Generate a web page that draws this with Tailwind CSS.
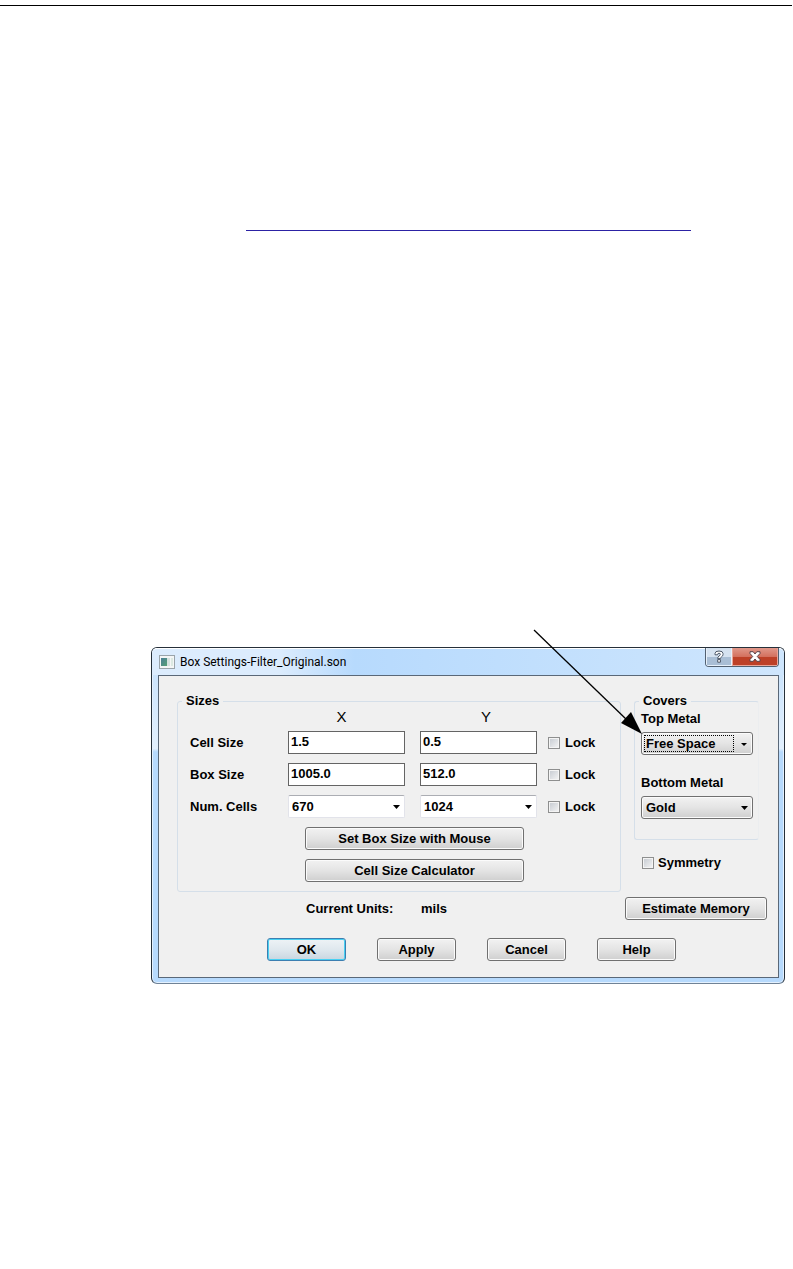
<!DOCTYPE html>
<html lang="en">
<head>
<meta charset="utf-8">
<meta name="viewport" content="width=device-width, initial-scale=1">
<title>Box Settings</title>
<script src="https://cdn.jsdelivr.net/npm/@tailwindcss/browser@4"></script>
</head>
<body class="bg-white pt-[5px] text-black">
<hr class="mr-px border-t border-black">
<div class="ml-[246px] mr-[102px] mt-56 border-t border-[#2c22a4]"></div>

<main class="relative ml-[151px] mr-2 mt-[416px] rounded-md border border-[#26303a] border-b-[#6f8296] bg-linear-to-b from-[#c4e0fc] from-0% via-[#e2f0fe] via-30% to-[#b7dafd] to-31% px-px pb-px font-['Liberation_Sans',Arial,sans-serif] text-[13px] leading-4 font-bold shadow-[inset_0_0_0_1px_#e4f1fe]">
  <header class="-mx-px flex h-[27px] items-start rounded-t-[5px] border-t border-white bg-linear-to-r from-[#dcecfd] from-20% via-[#b7dafd] via-32% to-[#cfe6fd] pl-[7px] pr-[5px]">
    <svg class="mt-[6px] h-[14px] w-4" viewBox="0 0 16 14" aria-hidden="true">
      <defs><linearGradient id="ic" x2="1" y2="1"><stop stop-color="#4b7f96"/><stop offset="1" stop-color="#55a076"/></linearGradient></defs>
      <rect x=".5" y=".5" width="15" height="13" fill="#f4f6f6" stroke="#9aa4aa"/>
      <rect x="2" y="3" width="6" height="8" fill="url(#ic)"/><rect x="8" y="3" width="3" height="8" fill="#d5e2df"/><rect x="12" y="3" width="2" height="8" fill="#dce9e2"/>
    </svg>
    <h1 class="ml-[5px] mt-[5px] font-['Roboto',sans-serif] text-[12px] font-normal leading-4">Box Settings-Filter_Original.son</h1>
    <div class="-mt-px ml-auto flex h-[19px] overflow-hidden rounded-b border border-t-0 border-[#526070]">
      <button type="button" aria-label="Help" class="flex w-[26px] items-center justify-center border border-t-0 border-[#e6f0fa] bg-linear-to-b from-[#d5e2f0] from-50% to-[#a9bed5] to-50%">
        <svg class="h-[13px] w-[10px]" viewBox="0 0 10 13"><path d="M1 4.800V3.500Q1 1 5 1t4 2.500v1Q9 6 7.500 6.900 6.400 7.500 6.400 8.600H3.700Q3.600 6.800 5 6q1.300-.7 1.300-1.500v-.6Q6.300 3.300 5 3.300t-1.300.7v.8zM3.700 9.600h2.700v2.600H3.700z" fill="#fff" stroke="#4d5868"/></svg>
      </button>
      <button type="button" aria-label="Close" class="flex w-[46px] items-center justify-center border border-t-0 border-[#e9a598] bg-linear-to-b from-[#e0988a] via-[#d4715f] via-50% to-[#bd4027] to-52%">
        <svg class="h-[11px] w-3" viewBox="0 0 12 11"><path d="M1 .7h3.200L6 3 7.800.7H11v1.800L8.300 5.500 11 8.500v1.800H7.800L6 8l-1.800 2.300H1V8.500l2.700-3L1 2.500z" fill="#fff" stroke="#59434a"/></svg>
      </button>
    </div>
  </header>

  <form class="mb-1 ml-[5px] mr-1 border border-[#5a6878] bg-[#f0f0f0] pb-4 pl-[18px] pr-[11px] pt-[17px]">
    <div class="flex items-start gap-[13px]">
      <fieldset class="min-w-0 flex-1 rounded-[3px] border border-[#d5dfe9] pb-[9px] pl-3 pt-0">
        <legend class="-ml-2 px-1">Sizes</legend>
        <div class="flex flex-col gap-[9px]">
          <div class="grid h-[13px] grid-cols-[98px_132px_128px_1fr] items-center text-[15px]">
            <span class="col-start-2 w-[107px] text-center font-normal">X</span><span class="w-[132px] text-center font-normal">Y</span>
          </div>
          <div class="grid h-[23px] grid-cols-[98px_132px_128px_1fr] items-center">
            <label for="cx">Cell Size</label>
            <input id="cx" value="1.5" class="h-[23px] w-[117px] border border-[#646464] bg-white px-0.5 pb-[3px]">
            <input aria-label="Cell Size Y" value="0.5" class="h-[23px] w-[117px] border border-[#646464] bg-white px-0.5 pb-[3px]">
            <label class="flex items-center gap-[5px]"><input type="checkbox" class="h-3 w-3 appearance-none border border-[#8e8f8f] bg-linear-to-br from-[#c4c9d0] to-[#f6f6f6] shadow-[inset_0_0_0_1px_#f4f4f4]">Lock</label>
          </div>
          <div class="grid h-[23px] grid-cols-[98px_132px_128px_1fr] items-center">
            <label for="bx">Box Size</label>
            <input id="bx" value="1005.0" class="h-[23px] w-[117px] border border-[#646464] bg-white px-0.5 pb-[3px]">
            <input aria-label="Box Size Y" value="512.0" class="h-[23px] w-[117px] border border-[#646464] bg-white px-0.5 pb-[3px]">
            <label class="flex items-center gap-[5px]"><input type="checkbox" class="h-3 w-3 appearance-none border border-[#8e8f8f] bg-linear-to-br from-[#c4c9d0] to-[#f6f6f6] shadow-[inset_0_0_0_1px_#f4f4f4]">Lock</label>
          </div>
          <div class="grid h-[23px] grid-cols-[98px_132px_128px_1fr] items-center">
            <label for="nx">Num. Cells</label>
            <div class="relative h-[23px] w-[117px]">
              <select id="nx" class="h-full w-full appearance-none rounded-[2px] border border-[#e2e3ea] border-t-[#abadb3] bg-white pl-[3px]"><option>670</option></select>
              <svg class="pointer-events-none absolute right-[5px] top-[10px] h-1 w-[7px]" viewBox="0 0 7 4"><path d="M0 0h7L3.500 4z"/></svg>
            </div>
            <div class="relative h-[23px] w-[117px]">
              <select aria-label="Num. Cells Y" class="h-full w-full appearance-none rounded-[2px] border border-[#e2e3ea] border-t-[#abadb3] bg-white pl-[3px]"><option>1024</option></select>
              <svg class="pointer-events-none absolute right-[5px] top-[10px] h-1 w-[7px]" viewBox="0 0 7 4"><path d="M0 0h7L3.500 4z"/></svg>
            </div>
            <label class="flex items-center gap-[5px]"><input type="checkbox" class="h-3 w-3 appearance-none border border-[#8e8f8f] bg-linear-to-br from-[#c4c9d0] to-[#f6f6f6] shadow-[inset_0_0_0_1px_#f4f4f4]">Lock</label>
          </div>
          <button type="button" class="ml-[115px] h-[23px] w-[219px] rounded-[3px] border border-[#707070] bg-linear-to-b from-[#f2f2f2] via-[#e4e4e4] via-50% to-[#cfcfcf] shadow-[inset_0_0_0_1px_#fbfbfb]">Set Box Size with Mouse</button>
          <button type="button" class="ml-[115px] h-[23px] w-[219px] rounded-[3px] border border-[#707070] bg-linear-to-b from-[#f2f2f2] via-[#e4e4e4] via-50% to-[#cfcfcf] shadow-[inset_0_0_0_1px_#fbfbfb]">Cell Size Calculator</button>
        </div>
      </fieldset>

      <div class="mr-2 w-[125px]">
        <fieldset class="rounded-[3px] border border-[#d5dfe9] border-r-[#ebedef] pb-5 pl-1.5 pr-[5px]">
          <legend class="-ml-0.5 px-1">Covers</legend>
          <label for="top" class="block pt-0.5">Top Metal</label>
          <div class="relative mt-[5px] h-[23px]">
            <select id="top" class="h-full w-full appearance-none rounded-[3px] border border-[#707070] bg-linear-to-b from-[#f2f2f2] via-[#e4e4e4] via-50% to-[#cfcfcf] pl-1 shadow-[inset_0_0_0_1px_#fbfbfb]"><option>Free Space</option></select>
            <span class="pointer-events-none absolute bottom-[3px] left-[3px] right-[19px] top-[3px] border border-dotted border-black"></span>
            <svg class="pointer-events-none absolute right-[6px] top-[11px] h-[3px] w-1.5" viewBox="0 0 6 3"><path d="M0 0h6L3 3z"/></svg>
          </div>
          <label for="bottom" class="mt-5 block">Bottom Metal</label>
          <div class="relative mt-[5px] h-[23px]">
            <select id="bottom" class="h-full w-full appearance-none rounded-[3px] border border-[#707070] bg-linear-to-b from-[#f2f2f2] via-[#e4e4e4] via-50% to-[#cfcfcf] pl-1 shadow-[inset_0_0_0_1px_#fbfbfb]"><option>Gold</option></select>
            <svg class="pointer-events-none absolute right-[5px] top-[10px] h-1 w-[7px]" viewBox="0 0 7 4"><path d="M0 0h7L3.500 4z"/></svg>
          </div>
        </fieldset>
        <label class="ml-2 mt-[15px] flex items-center gap-1"><input type="checkbox" class="h-3 w-3 appearance-none border border-[#8e8f8f] bg-linear-to-br from-[#c4c9d0] to-[#f6f6f6] shadow-[inset_0_0_0_1px_#f4f4f4]">Symmetry</label>
      </div>
    </div>

    <div class="mt-[5px] flex h-[23px] items-center pl-[129px]">
      <span class="w-[115px]">Current Units:</span><span>mils</span>
      <button type="button" class="ml-auto h-[23px] w-[142px] rounded-[3px] border border-[#707070] bg-linear-to-b from-[#f2f2f2] via-[#e4e4e4] via-50% to-[#cfcfcf] shadow-[inset_0_0_0_1px_#fbfbfb]">Estimate Memory</button>
    </div>

    <div class="mt-[18px] flex gap-[31px] pl-[90px]">
      <button type="button" class="h-[23px] w-[79px] rounded-[3px] border border-[#3c7fb1] bg-linear-to-b from-[#eef3f6] via-[#dfe8ee] via-50% to-[#c8d6e0] shadow-[inset_0_0_0_1px_#48d0f2]">OK</button>
      <button type="button" class="h-[23px] w-[79px] rounded-[3px] border border-[#707070] bg-linear-to-b from-[#f2f2f2] via-[#e4e4e4] via-50% to-[#cfcfcf] shadow-[inset_0_0_0_1px_#fbfbfb]">Apply</button>
      <button type="button" class="h-[23px] w-[79px] rounded-[3px] border border-[#707070] bg-linear-to-b from-[#f2f2f2] via-[#e4e4e4] via-50% to-[#cfcfcf] shadow-[inset_0_0_0_1px_#fbfbfb]">Cancel</button>
      <button type="button" class="h-[23px] w-[79px] rounded-[3px] border border-[#707070] bg-linear-to-b from-[#f2f2f2] via-[#e4e4e4] via-50% to-[#cfcfcf] shadow-[inset_0_0_0_1px_#fbfbfb]">Help</button>
    </div>
  </form>

  <!-- Pointer to the Top Metal list -->
  <svg class="pointer-events-none absolute -top-[19px] right-[141px] h-[106px] w-[110px]" viewBox="0 0 110 106" aria-hidden="true">
    <path d="M1 1l93 90" stroke="#000" stroke-width="1.300"/><path d="M109 105L88 94l10-11z"/>
  </svg>
</main>
</body>
</html>
